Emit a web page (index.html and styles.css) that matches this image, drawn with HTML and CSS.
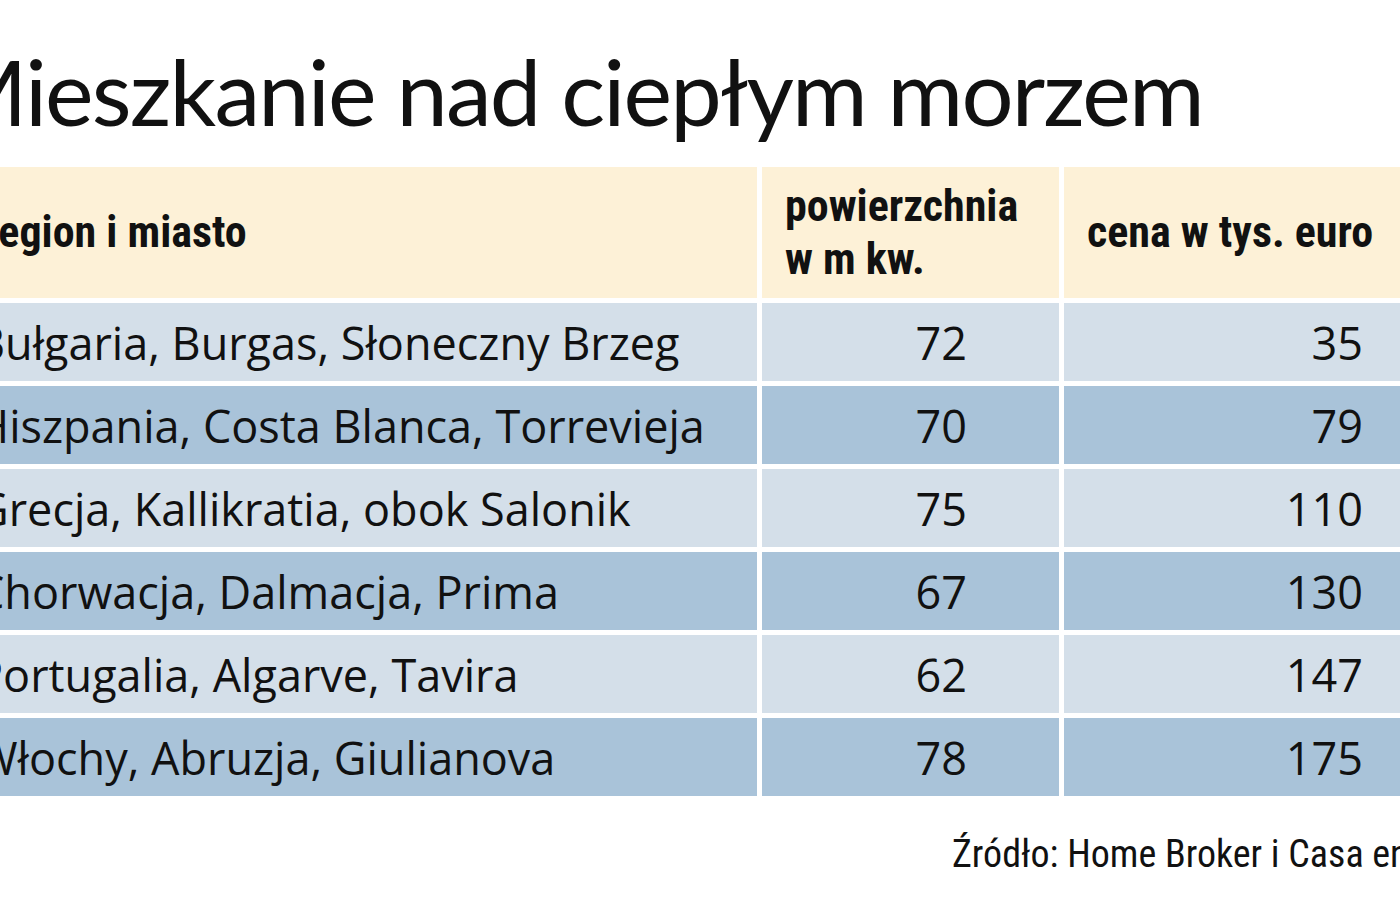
FILE: index.html
```html
<!DOCTYPE html>
<html lang="pl">
<head>
<meta charset="utf-8">
<title>Mieszkanie nad ciepłym morzem</title>
<link rel="stylesheet" href="styles.css">
</head>
<body>
<div class="page">
  <h1 class="title">Mieszkanie nad ciepłym morzem</h1>
  <div class="table">
    <div class="cell head first">Region i miasto</div>
    <div class="cell head">powierzchnia<br>w m kw.</div>
    <div class="cell head">cena w tys. euro</div>

    <div class="cell light">Bułgaria, Burgas, Słoneczny Brzeg</div>
    <div class="cell light num">72</div>
    <div class="cell light num last">35</div>

    <div class="cell dark">Hiszpania, Costa Blanca, Torrevieja</div>
    <div class="cell dark num">70</div>
    <div class="cell dark num last">79</div>

    <div class="cell light">Grecja, Kallikratia, obok Salonik</div>
    <div class="cell light num">75</div>
    <div class="cell light num last">110</div>

    <div class="cell dark">Chorwacja, Dalmacja, Prima</div>
    <div class="cell dark num">67</div>
    <div class="cell dark num last">130</div>

    <div class="cell light">Portugalia, Algarve, Tavira</div>
    <div class="cell light num">62</div>
    <div class="cell light num last">147</div>

    <div class="cell dark">Włochy, Abruzja, Giulianova</div>
    <div class="cell dark num">78</div>
    <div class="cell dark num last">175</div>
  </div>
  <div class="source">Źródło: Home Broker i Casa en España</div>
</div>
</body>
</html>
```
FILE: styles.css
```css
html, body {
  margin: 0;
  padding: 0;
  background: #ffffff;
  overflow: hidden;
}
body {
  width: 1400px;
  height: 900px;
  font-family: "Open Sans", "Noto Sans", sans-serif;
  color: #111111;
}
.page {
  margin-left: -30px;
  width: 1500px;
  padding-top: 35px;
}
.title {
  margin: 0 0 0 -28px;
  font-family: Lato, "Open Sans", sans-serif;
  font-weight: 400;
  font-size: 92px;
  letter-spacing: -1.85px;
  line-height: 112px;
  height: 132px;
  white-space: nowrap;
}
.table {
  display: grid;
  grid-template-columns: 787px 297px 400px;
  grid-template-rows: 131px repeat(6, 78px);
  column-gap: 5px;
  row-gap: 5px;
}
.cell {
  display: flex;
  align-items: center;
  font-size: 45px;
  white-space: nowrap;
  padding-left: 6px;
}
.head {
  background: #fdf1d7;
  font-family: "Roboto Condensed", "Liberation Sans", sans-serif;
  font-weight: 700;
  font-size: 44px;
  line-height: 53px;
  padding-left: 23px;
}
.head.first {
  padding-left: 4px;
}
.light { background: #d4dfe9; }
.dark { background: #a9c3d9; }
.num {
  justify-content: flex-end;
  padding-right: 92px;
}
.num.last {
  padding-right: 101px;
}
.source {
  margin-top: 36px;
  padding-left: 982px;
  font-family: "Roboto Condensed", "Liberation Sans", sans-serif;
  font-size: 38px;
  white-space: nowrap;
}
```
